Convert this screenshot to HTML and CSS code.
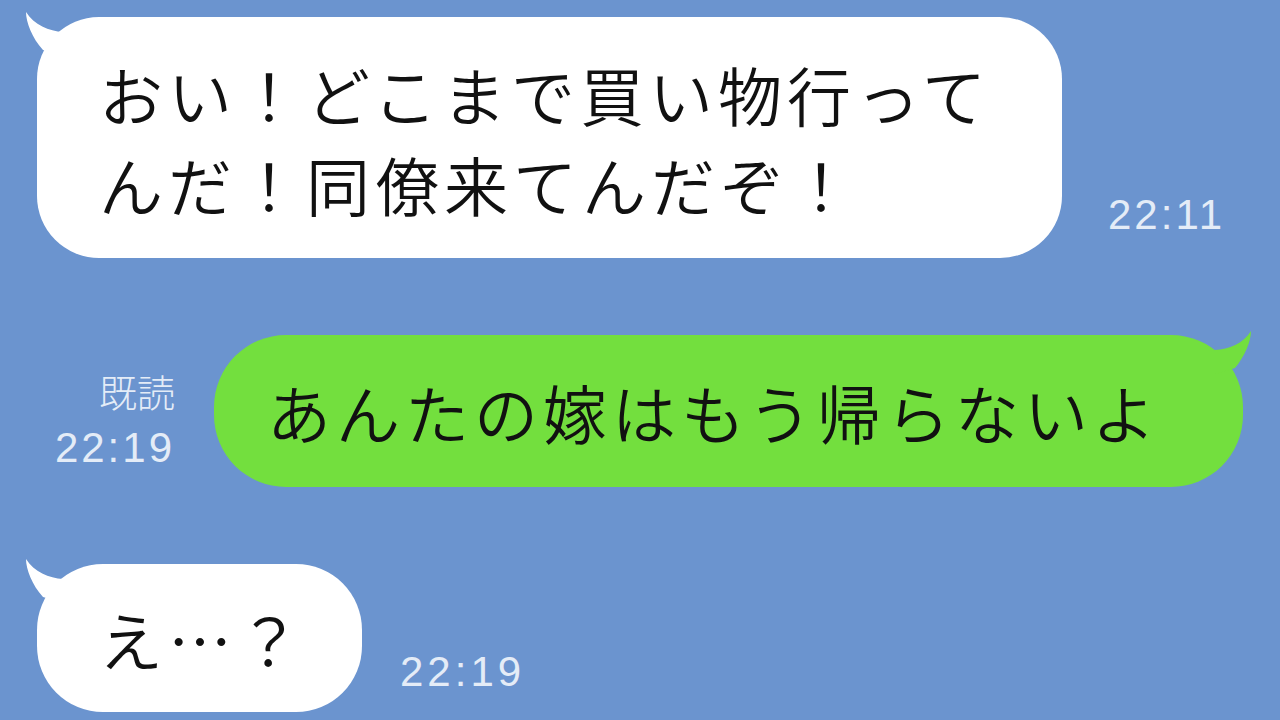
FILE: index.html
```html
<!DOCTYPE html>
<html lang="ja">
<head>
<meta charset="utf-8">
<title>LINE</title>
<link rel="stylesheet" href="styles.css">
</head>
<body>
<main class="chat">
  <div class="row row-in row-first">
    <div class="bubble bubble-white bubble-long">
      <svg class="tail tail-left" viewBox="0 0 60 60" width="60" height="60"><path d="M3,2 C3,12 9,28 20,40 L40,46 L40,22 C26,21 11,15 3,2 Z"/></svg>
      <p class="msg">おい！どこまで買い物行って<br>んだ！同僚来てんだぞ！</p>
    </div>
    <span class="time time-first">22:11</span>
  </div>

  <div class="row row-out">
    <div class="meta">
      <span class="read">既読</span>
      <span class="time">22:19</span>
    </div>
    <div class="bubble bubble-green bubble-mine">
      <svg class="tail tail-right" viewBox="0 0 60 60" width="60" height="60"><path d="M54,3 C54,13 48,28 38,40 L18,46 L18,22 C32,21 46,16 54,3 Z"/></svg>
      <p class="msg">あんたの嫁はもう帰らないよ</p>
    </div>
  </div>

  <div class="row row-in">
    <div class="bubble bubble-white bubble-short">
      <svg class="tail tail-left" viewBox="0 0 60 60" width="60" height="60"><path d="M3,2 C3,12 9,28 20,40 L40,46 L40,22 C26,21 11,15 3,2 Z"/></svg>
      <p class="msg">え…？</p>
    </div>
    <span class="time time-last">22:19</span>
  </div>
</main>
</body>
</html>
```

FILE: styles.css
```css
html, body {
  margin: 0;
  padding: 0;
}

body {
  width: 1280px;
  height: 720px;
  overflow: hidden;
  background: #6b94cf;
  font-family: "Noto Sans CJK JP", "Noto Sans", sans-serif;
}

.chat {
  display: flex;
  flex-direction: column;
  gap: 77px;
  padding: 17px 37px 0 37px;
}

.row {
  display: flex;
  align-items: flex-end;
}

.row-out {
  justify-content: flex-end;
}

.bubble {
  position: relative;
  box-sizing: border-box;
  display: flex;
  align-items: center;
}

.bubble-white {
  background: #ffffff;
  fill: #ffffff;
}

.bubble-green {
  background: #73df3e;
  fill: #73df3e;
}

.bubble-long {
  width: 1025px;
  height: 241px;
  border-radius: 62px;
  padding-left: 62px;
}

.bubble-mine {
  width: 1029px;
  height: 152px;
  border-radius: 72px;
  padding-left: 53px;
}

.bubble-short {
  width: 325px;
  height: 148px;
  border-radius: 66px;
  padding-left: 62px;
}

.tail {
  position: absolute;
  top: -7px;
}

.tail-left {
  left: -14px;
}

.tail-right {
  right: -14px;
}

.msg {
  position: relative;
  margin: 0;
  font-size: 64px;
  font-weight: 350;
  line-height: 90px;
  letter-spacing: 5px;
  color: #111111;
  white-space: nowrap;
}

.time {
  font-family: "Liberation Sans", Arial, sans-serif;
  font-size: 42px;
  font-weight: 300;
  line-height: 42px;
  letter-spacing: 3px;
  color: #e4ecf7;
}

.time-first {
  margin-left: 46px;
  margin-bottom: 22px;
}

.time-last {
  margin-left: 38px;
  margin-bottom: 19px;
  letter-spacing: 4px;
}

.meta {
  display: flex;
  flex-direction: column;
  align-items: flex-end;
  margin-right: 39px;
  margin-bottom: 18px;
}

.read {
  font-size: 38px;
  font-weight: 300;
  line-height: 44px;
  margin-bottom: 14px;
  color: #e4ecf7;
}
```
